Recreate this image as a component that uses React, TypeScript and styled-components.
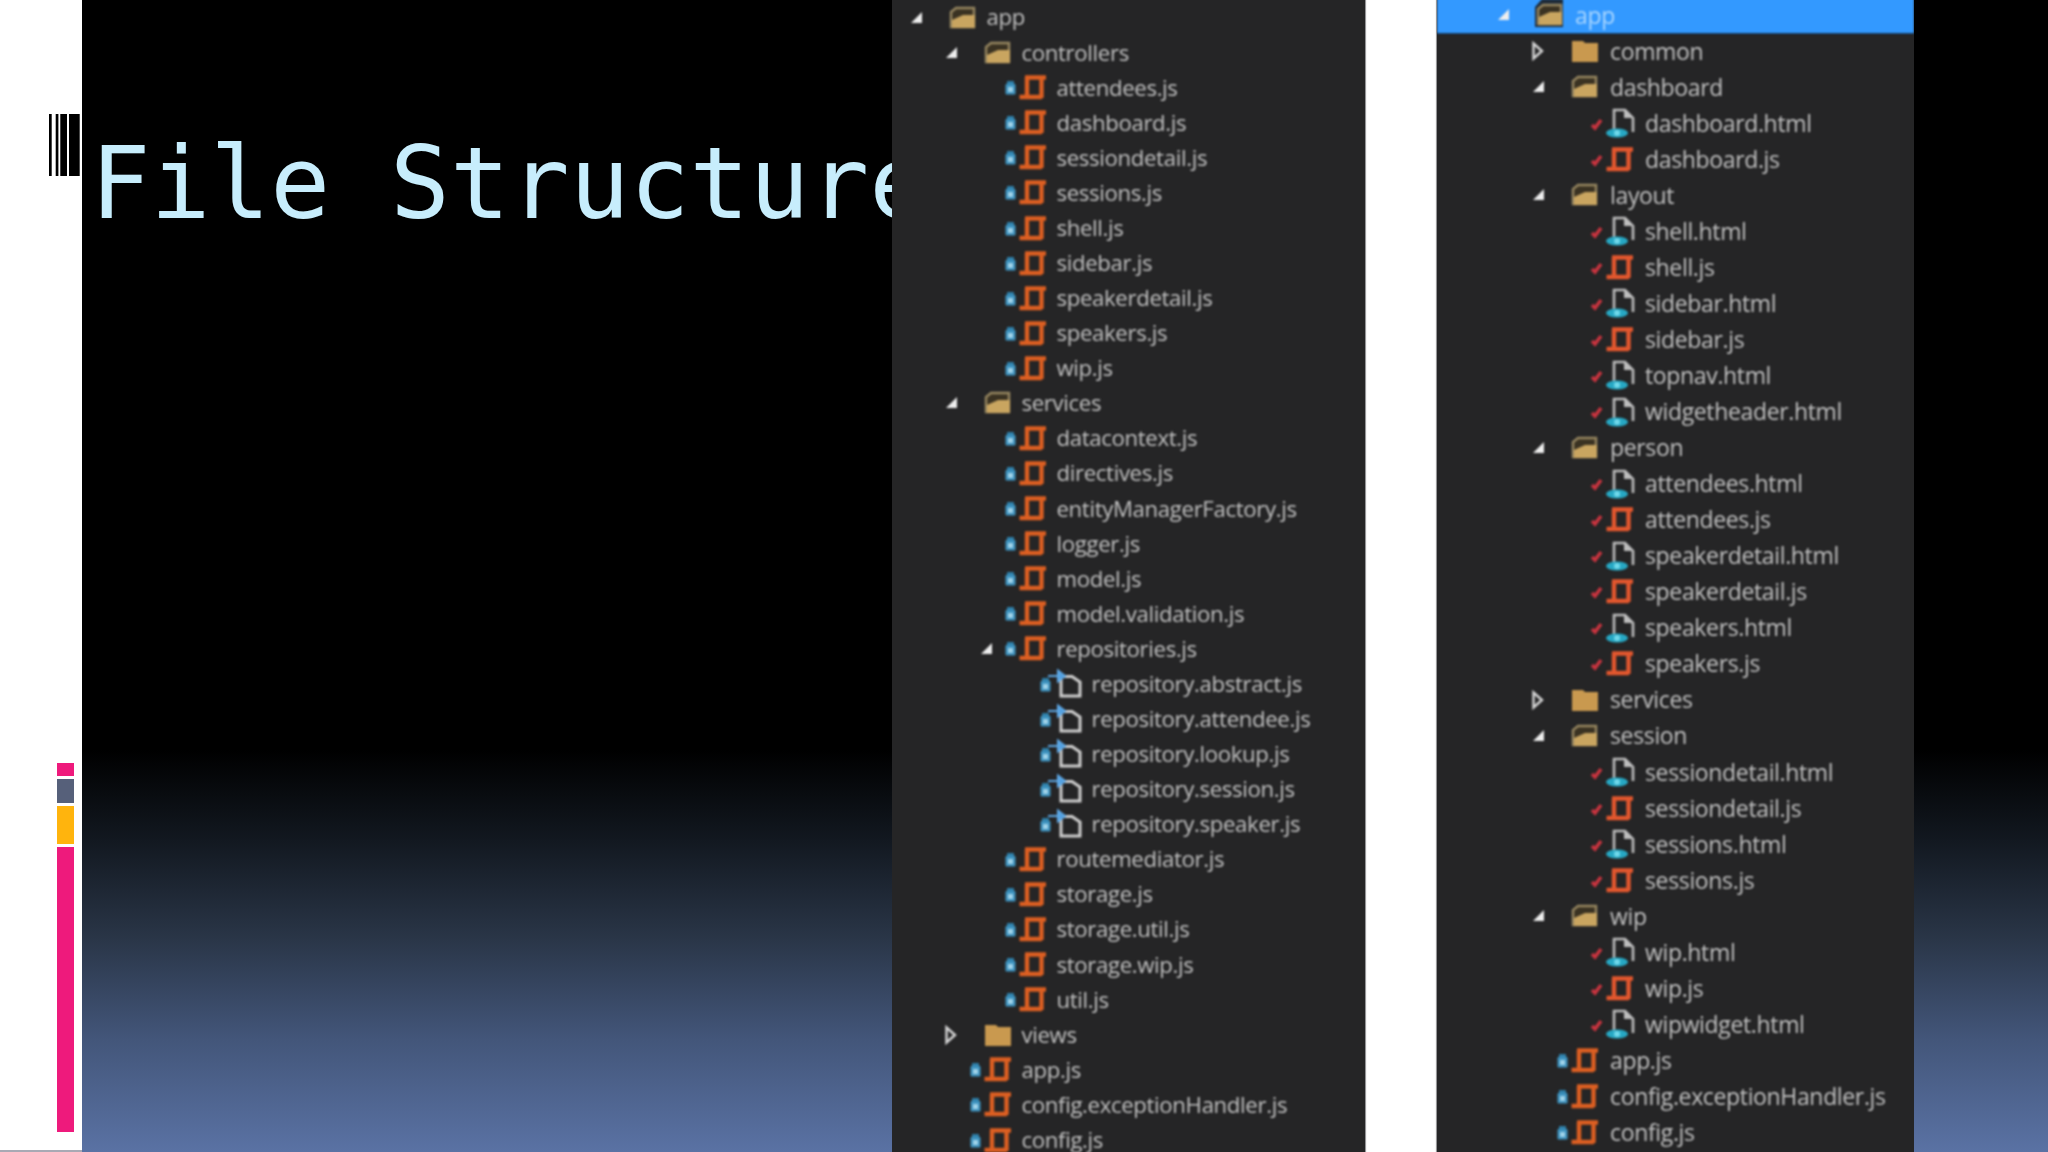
import type { JSX } from 'react';
import styled, { createGlobalStyle } from 'styled-components';

type Kind = 'js' | 'html' | 'nested' | 'folder' | 'open';
type Mark = 'lock' | 'check';

interface Entry {
  name: string;
  depth: number;
  kind: Kind;
  arrow?: 'open' | 'closed';
  mark?: Mark;
  selected?: boolean;
}

const Global = createGlobalStyle`
  html, body { margin: 0; padding: 0; background: #fff; }
`;

const jsFile = (name: string, depth: number, arrow?: 'open'): Entry => ({ name, depth, kind: 'js', mark: 'lock', arrow });
const nested = (name: string): Entry => ({ name, depth: 3, kind: 'nested', mark: 'lock' });
const openDir = (name: string, depth: number): Entry => ({ name, depth, kind: 'open', arrow: 'open' });
const shutDir = (name: string, depth: number): Entry => ({ name, depth, kind: 'folder', arrow: 'closed' });
const html = (name: string): Entry => ({ name, depth: 2, kind: 'html', mark: 'check' });
const script = (name: string): Entry => ({ name, depth: 2, kind: 'js', mark: 'check' });

const leftTree: Entry[] = [
  openDir('app', 0),
  openDir('controllers', 1),
  ...['attendees.js', 'dashboard.js', 'sessiondetail.js', 'sessions.js', 'shell.js', 'sidebar.js', 'speakerdetail.js', 'speakers.js', 'wip.js'].map((n) => jsFile(n, 2)),
  openDir('services', 1),
  ...['datacontext.js', 'directives.js', 'entityManagerFactory.js', 'logger.js', 'model.js', 'model.validation.js'].map((n) => jsFile(n, 2)),
  jsFile('repositories.js', 2, 'open'),
  ...['repository.abstract.js', 'repository.attendee.js', 'repository.lookup.js', 'repository.session.js', 'repository.speaker.js'].map(nested),
  ...['routemediator.js', 'storage.js', 'storage.util.js', 'storage.wip.js', 'util.js'].map((n) => jsFile(n, 2)),
  shutDir('views', 1),
  jsFile('app.js', 1),
  jsFile('config.exceptionHandler.js', 1),
  jsFile('config.js', 1),
];

const rightTree: Entry[] = [
  { ...openDir('app', 0), selected: true },
  shutDir('common', 1),
  openDir('dashboard', 1),
  html('dashboard.html'),
  script('dashboard.js'),
  openDir('layout', 1),
  html('shell.html'),
  script('shell.js'),
  html('sidebar.html'),
  script('sidebar.js'),
  html('topnav.html'),
  html('widgetheader.html'),
  openDir('person', 1),
  html('attendees.html'),
  script('attendees.js'),
  html('speakerdetail.html'),
  script('speakerdetail.js'),
  html('speakers.html'),
  script('speakers.js'),
  shutDir('services', 1),
  openDir('session', 1),
  html('sessiondetail.html'),
  script('sessiondetail.js'),
  html('sessions.html'),
  script('sessions.js'),
  openDir('wip', 1),
  html('wip.html'),
  script('wip.js'),
  html('wipwidget.html'),
  jsFile('app.js', 1),
  jsFile('config.exceptionHandler.js', 1),
  jsFile('config.js', 1),
];

const Slide = styled.div`
  width: 2048px;
  height: 1152px;
  display: grid;
  grid-template-columns: 82px 810px 473px 72px 477px 134px;
  overflow: hidden;
  background: #fff;
`;

const Margin = styled.div`
  display: flex;
  flex-direction: column;
  align-items: flex-end;
  padding: 114px 2px 0 0;
  border-bottom: 2px solid #a9a9b4;
  box-sizing: border-box;
`;

const Barcode = styled.svg`
  display: block;
  width: 31px;
  height: 62px;
  margin-bottom: 587px;
`;

const Stack = styled.div`
  display: flex;
  flex-direction: column;
  gap: 3px;
  width: 17px;
  margin-right: 6px;
`;

const Block = styled.div<{ $h: number; $c: string }>`
  height: ${(p) => p.$h}px;
  background: ${(p) => p.$c};
`;

const Sky = styled.div`
  background: linear-gradient(180deg, #000 0, #000 750px, #121820 840px, #2a3648 940px, #43567a 1040px, #5a72a4 1152px);
`;

const TitleArea = styled(Sky)`
  overflow: hidden;
  padding: 126px 0 0 8.5px;
`;

const Title = styled.h1`
  margin: 0;
  font: 400 99.5px/1.17 'DejaVu Sans Mono', monospace;
  color: #c7edfc;
  white-space: nowrap;
`;

const Gap = styled.div`
  background: #fff;
  box-shadow: inset 2px 0 1px -1px #8a8a8c, inset -2px 0 1px -1px #8a8a8c;
`;

const Panel = styled.div`
  background: #252526;
  overflow: hidden;
`;

const Blurred = styled.div<{ $top: number; $left: number }>`
  margin-top: ${(p) => p.$top}px;
  padding-left: ${(p) => p.$left}px;
  filter: blur(0.8px);
`;

const Row = styled.div<{ $h: number; $depth: number; $selected?: boolean; $left: number }>`
  height: ${(p) => p.$h}px;
  display: flex;
  align-items: center;
  margin-left: ${(p) => (p.$selected ? -p.$left : 0)}px;
  padding-left: ${(p) => p.$depth * 35 + (p.$selected ? p.$left : 0)}px;
  background: ${(p) => (p.$selected ? '#3399ff' : 'transparent')};
  box-shadow: ${(p) => (p.$selected ? '0 1px 0 #12406e' : 'none')};
  position: relative;
`;

const Slot = styled.div`
  width: 39px;
  height: 24px;
  flex: none;
  display: flex;
  align-items: center;
  justify-content: space-between;
  padding-right: 3px;
  box-sizing: border-box;
`;

const Label = styled.span<{ $selected?: boolean; $size: number; $gap: number }>`
  margin-left: ${(p) => p.$gap}px;
  font: 400 ${(p) => p.$size}px/1 'Open Sans', 'Noto Sans', sans-serif;
  letter-spacing: -0.35px;
  color: ${(p) => (p.$selected ? '#a9d6ff' : '#c2c2c2')};
  white-space: nowrap;
`;

const Icon = styled.svg`
  display: block;
  flex: none;
  overflow: visible;
`;

const Tri = ({ open }: { open: boolean }) =>
  open ? (
    <Icon width="14" height="14" viewBox="0 0 14 14">
      <path d="M1 12 L12 1 V12 Z" fill="#eeeeee" />
    </Icon>
  ) : (
    <Icon width="12" height="18" viewBox="0 0 12 18">
      <path d="M1.5 1.5 L10 9 L1.5 16.5 Z" fill="none" stroke="#d6d6d6" strokeWidth="2.4" />
    </Icon>
  );

const Lock = () => (
  <Icon width="11" height="15" viewBox="0 0 11 15" style={{ marginLeft: 'auto' }}>
    <rect x="2" y="1" width="7" height="5" fill="#2f7fa8" />
    <rect x="0.5" y="4" width="10" height="10.5" rx="1" fill="#3f94c0" />
    <rect x="3" y="7" width="5" height="5" fill="#9fd2e8" />
  </Icon>
);

const Check = () => (
  <Icon width="13" height="15" viewBox="0 0 13 15" style={{ marginLeft: 'auto' }}>
    <path d="M2 9 L5 12 L11 4" fill="none" stroke="#c8343f" strokeWidth="3.6" />
  </Icon>
);

const Folder = () => (
  <Icon width="28" height="24" viewBox="0 0 28 24">
    <path d="M1 2 H12 L14 4 H27 V23 H1 Z" fill="#c9994f" />
  </Icon>
);

const OpenFolder = ({ selected }: { selected?: boolean }) => (
  <Icon width="28" height="24" viewBox="0 0 28 24">
    {selected && <path d="M-1 24 V4 L6 -4 H27 V24 Z" fill="#1d2a38" />}
    <path d="M2 21 V6 L7 2 H25 V21 Z" fill="#3a3222" stroke="#968660" strokeWidth="2.4" />
    <path d="M3 22 V14 L14 9 H26 V22 Z" fill="#c9a560" />
  </Icon>
);

const ScriptIcon = ({ checked }: { checked?: boolean }) => (
  <Icon width="28" height="27" viewBox="0 0 28 27">
    <path
      d="M6 3.5 H27 M8 3 V22 M22.5 4 V24 M0.5 23 H23"
      fill="none"
      stroke={checked ? '#e3572e' : '#dd5f22'}
      strokeWidth="4.4"
    />
  </Icon>
);

const HtmlIcon = () => (
  <Icon width="28" height="30" viewBox="0 0 28 30">
    <path d="M8 24 V2 H19 L27 10 V24" fill="none" stroke="#bdbdbd" strokeWidth="2.6" />
    <path d="M18 2 V10 H27" fill="#bdbdbd" />
    <ellipse cx="11" cy="25" rx="11" ry="4.5" fill="#27a8c4" />
    <circle cx="11" cy="25" r="3" fill="#6fd8ea" />
  </Icon>
);

const NestedIcon = () => (
  <Icon width="28" height="28" viewBox="0 0 28 28">
    <path d="M7 6.5 V26 H26 V12 L18 6.5 Z" fill="none" stroke="#cfcfcf" strokeWidth="3" />
    <path d="M-6 6 H6 M4 0.5 L11 6 L4 11.5 Z" fill="#4f9fe0" stroke="#5fa9e6" strokeWidth="2" />
  </Icon>
);

const renderIcon = (e: Entry): JSX.Element => {
  switch (e.kind) {
    case 'js':
      return <ScriptIcon checked={e.mark === 'check'} />;
    case 'html':
      return <HtmlIcon />;
    case 'nested':
      return <NestedIcon />;
    case 'folder':
      return <Folder />;
    default:
      return <OpenFolder selected={e.selected} />;
  }
};

interface TreeProps {
  entries: Entry[];
  rowHeight: number;
  top: number;
  left: number;
  size: number;
  gap: number;
}

const Tree = ({ entries, rowHeight, top, left, size, gap }: TreeProps) => (
  <Blurred $top={top} $left={left}>
    {entries.map((e, i) => (
      <Row key={i} $h={rowHeight} $depth={e.depth} $selected={e.selected} $left={left}>
        <Slot>
          {e.arrow && <Tri open={e.arrow === 'open'} />}
          {e.mark === 'lock' && <Lock />}
          {e.mark === 'check' && <Check />}
        </Slot>
        {renderIcon(e)}
        <Label $selected={e.selected} $size={size} $gap={gap}>
          {e.name}
        </Label>
      </Row>
    ))}
  </Blurred>
);

export default function App() {
  return (
    <>
      <Global />
      <Slide>
        <Margin>
          <Barcode viewBox="0 0 31 62">
            <rect x="0" width="2.7" height="62" />
            <rect x="6.7" width="2.7" height="62" />
            <rect x="11.3" width="6.7" height="62" />
            <rect x="20" width="10.7" height="62" />
          </Barcode>
          <Stack>
            <Block $h={13} $c="#ee1a7c" />
            <Block $h={24} $c="#56607a" />
            <Block $h={38} $c="#ffb40d" />
            <Block $h={285} $c="#ee1a7c" />
          </Stack>
        </Margin>
        <TitleArea>
          <Title>File Structure</Title>
        </TitleArea>
        <Panel>
          <Tree entries={leftTree} rowHeight={35.08} top={0} left={18} size={22.2} gap={9.5} />
        </Panel>
        <Gap />
        <Panel>
          <Tree entries={rightTree} rowHeight={36.05} top={-3} left={60} size={23} gap={11} />
        </Panel>
        <Sky />
      </Slide>
    </>
  );
}
